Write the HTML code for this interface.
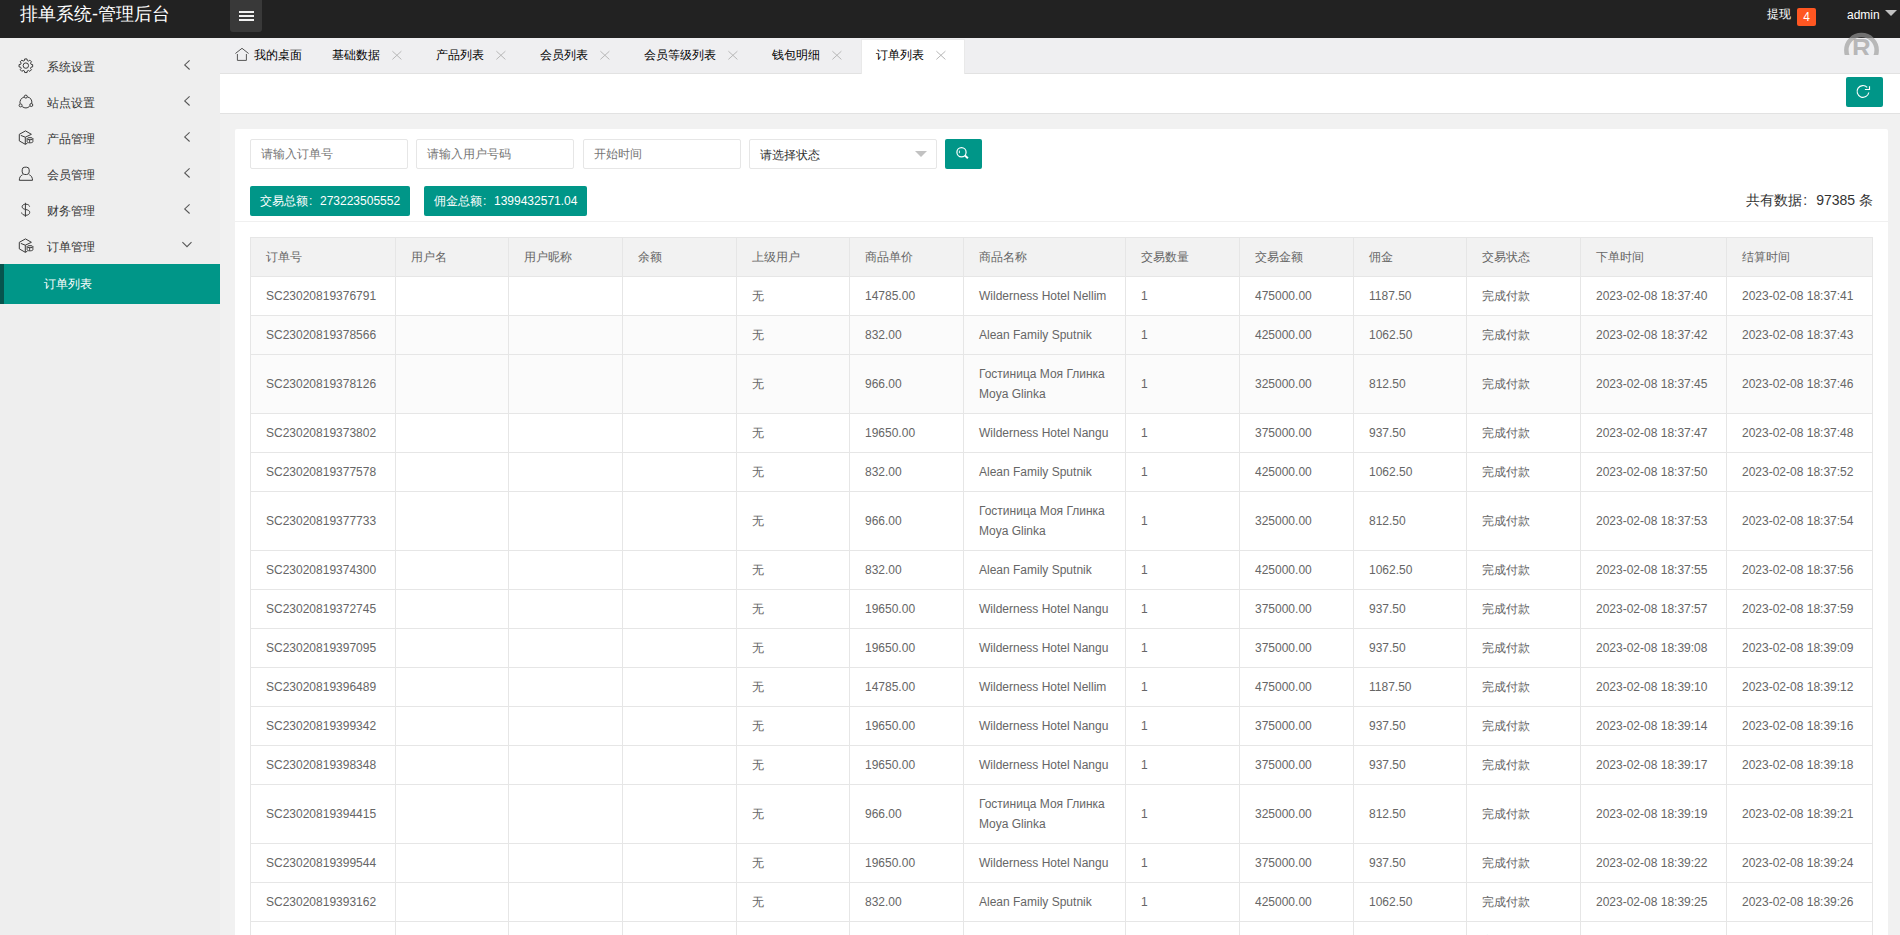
<!DOCTYPE html>
<html><head><meta charset="utf-8">
<style>
*{margin:0;padding:0;box-sizing:border-box}
html,body{width:1900px;height:935px;overflow:hidden;background:#f1f1f1;font-family:"Liberation Sans",sans-serif;font-size:12px;color:#333}
.hdr{position:absolute;left:0;top:0;width:1900px;height:38px;background:#222}
.logo{position:absolute;left:20px;top:0;height:32px;line-height:29px;color:#fff;font-size:18px}
.ham{position:absolute;left:230px;top:0;width:32px;height:32px;background:#393939;border-radius:0 0 3px 3px}
.ham i{position:absolute;left:9px;width:15px;height:2px;background:#f0f0f0}
.side{position:absolute;left:0;top:38px;width:220px;height:897px;background:#eee}
.mi{position:absolute;left:0;width:220px;height:36px}
.mi .ic{position:absolute;left:14px;top:6px;width:24px;height:24px}
.mi .tx{position:absolute;left:47px;top:1px;line-height:36px;font-size:12px;color:#333}
.mi .ar{position:absolute;left:176px;top:6px;width:24px;height:24px}
.sub{position:absolute;left:0;top:226px;width:220px;height:40px;background:#009688;border-left:4px solid #06544d}
.sub span{position:absolute;left:40px;top:0;line-height:40px;color:#fff;font-size:12px}
.tabs{position:absolute;left:220px;top:38px;width:1680px;height:36px;background:#efeff1;border-bottom:1px solid #e2e2e2}
.tab{position:absolute;top:0;height:36px;line-height:35px;font-size:12px;color:#000}
.tab.act{top:1px;height:36px;background:#fff;border:1px solid #e9e9e9;border-bottom:none}
.tab .x{position:absolute;top:5px;width:24px;height:24px}
.bar{position:absolute;left:220px;top:74px;width:1680px;height:40px;background:#fff;border-bottom:1px solid #e2e2e2}
.rbtn{position:absolute;left:1626px;top:3px;width:37px;height:30px;background:#009688;border-radius:2px}
.card{position:absolute;left:235px;top:129px;width:1653px;height:900px;background:#fff;border-radius:2px}
.inp{position:absolute;top:10px;height:30px;border:1px solid #e6e6e6;border-radius:2px;background:#fff;line-height:28px;padding-left:10px;color:#757575;font-size:12px}
.sbtn{position:absolute;left:710px;top:10px;width:37px;height:30px;background:#009688;border-radius:2px}
.gbtn{position:absolute;top:57px;height:30px;line-height:30px;background:#009688;color:#fff;border-radius:2px;padding:0 10px;font-size:12px;white-space:nowrap}
.total{position:absolute;right:15px;top:56px;line-height:30px;font-size:14px;color:#333}
.sep{position:absolute;left:0;top:92px;width:1653px;height:1px;background:#f0f0f0}
table{position:absolute;left:15px;top:108px;border-collapse:collapse;table-layout:fixed;width:1622px}
th,td{border:1px solid #e6e6e6;padding:9px 15px;line-height:20px;font-size:12px;text-align:left;font-weight:normal;color:#666;white-space:normal}
th{background:#f2f2f2}
.c12{display:inline-block;width:12px;padding-left:1px}
.c14{display:inline-block;width:14px;padding-left:1px}
.g td{background:#fbfbfb}
</style></head><body>
<div class="hdr">
  <div class="logo">排单系统-管理后台</div>
  <div class="ham"><i style="top:11px"></i><i style="top:15px"></i><i style="top:19px"></i></div>
  <div style="position:absolute;left:1767px;top:6px;line-height:16px;color:#fff;font-size:12px">提现</div>
  <div style="position:absolute;left:1797px;top:8px;width:19px;height:18px;background:#ff5722;border-radius:2px;color:#fff;font-size:12px;line-height:18px;text-align:center">4</div>
  <div style="position:absolute;left:1847px;top:7px;line-height:16px;color:#fff;font-size:12px">admin</div>
  <span style="position:absolute;left:1885px;top:10px;width:0;height:0;border-left:6px solid transparent;border-right:6px solid transparent;border-top:6px solid #c2c2c2"></span>
</div>
<div class="side">
  <div class="mi" style="top:10px"><svg class="ic" width="24" height="24" viewBox="0 0 24 24" fill="none" stroke="#3a3a3a" stroke-width="1"><path d="M10.46 6.53 L10.68 4.95 L13.02 4.95 L13.24 6.53 L14.56 7.08 L15.83 6.12 L17.48 7.77 L16.52 9.04 L17.07 10.36 L18.65 10.58 L18.65 12.92 L17.07 13.14 L16.52 14.46 L17.48 15.73 L15.83 17.38 L14.56 16.42 L13.24 16.97 L13.02 18.55 L10.68 18.55 L10.46 16.97 L9.14 16.42 L7.87 17.38 L6.22 15.73 L7.18 14.46 L6.63 13.14 L5.05 12.92 L5.05 10.58 L6.63 10.36 L7.18 9.04 L6.22 7.77 L7.87 6.12 L9.14 7.08Z"/><circle cx="11.85" cy="11.6" r="2.7"/></svg><span class="tx">系统设置</span><svg class="ar" width="24" height="24" viewBox="0 0 24 24" fill="none" stroke="#555" stroke-width="1.05"><path d="M13.6 6.3L8.7 10.9l4.9 4.6"/></svg></div>
  <div class="mi" style="top:46px"><svg class="ic" width="24" height="24" viewBox="0 0 24 24" fill="none" stroke="#3a3a3a" stroke-width="1"><path d="M10.3 6.9A6 6 0 0 0 6 13.6M8.2 16.6a6 6 0 0 0 7.5-.3M17.8 13.4a6 6 0 0 0-4.4-6.5"/><circle cx="11.8" cy="6.6" r="1.5"/><circle cx="6.6" cy="15.4" r="1.5"/><circle cx="17.3" cy="15" r="1.5"/></svg><span class="tx">站点设置</span><svg class="ar" width="24" height="24" viewBox="0 0 24 24" fill="none" stroke="#555" stroke-width="1.05"><path d="M13.6 6.3L8.7 10.9l4.9 4.6"/></svg></div>
  <div class="mi" style="top:82px"><svg class="ic" width="24" height="24" viewBox="0 0 24 24" fill="none" stroke="#3a3a3a" stroke-width="1"><path d="M5.3 8.3L11.5 4.9l5.9 3.4-6.1 2.9M5.3 8.3v6.6l6 3.4 2.1-1.1M11.3 11.2v7.1M6.8 9.4l4.5 1.8"/><ellipse cx="16" cy="12.7" rx="2.9" ry="1.05"/><path d="M13.1 12.7v3.1c0 .6 1.3 1.05 2.9 1.05s2.9-.45 2.9-1.05v-3.1M15.6 13.8v2.9" stroke-width="0.9"/></svg><span class="tx">产品管理</span><svg class="ar" width="24" height="24" viewBox="0 0 24 24" fill="none" stroke="#555" stroke-width="1.05"><path d="M13.6 6.3L8.7 10.9l4.9 4.6"/></svg></div>
  <div class="mi" style="top:118px"><svg class="ic" width="24" height="24" viewBox="0 0 24 24" fill="none" stroke="#3a3a3a" stroke-width="1"><rect x="8.2" y="5.2" width="7" height="7.3" rx="2.6"/><path d="M8.5 12.8C6.5 13.6 5.3 15.5 5.3 18.3h13.2c0-2.8-1.2-4.7-3.2-5.5"/></svg><span class="tx">会员管理</span><svg class="ar" width="24" height="24" viewBox="0 0 24 24" fill="none" stroke="#555" stroke-width="1.05"><path d="M13.6 6.3L8.7 10.9l4.9 4.6"/></svg></div>
  <div class="mi" style="top:154px"><svg class="ic" width="24" height="24" viewBox="0 0 24 24" fill="none" stroke="#3a3a3a" stroke-width="1"><path d="M15.6 8.6c-.2-1.3-1.6-2.4-3.8-2.4-2.2 0-3.7 1-3.7 2.6 0 1.6 1.5 2.2 3.7 2.7 2.3.5 3.9 1.1 3.9 2.9 0 1.7-1.6 2.9-4 2.9-2.3 0-3.9-1.2-4.1-2.8M11.4 4.8v14"/></svg><span class="tx">财务管理</span><svg class="ar" width="24" height="24" viewBox="0 0 24 24" fill="none" stroke="#555" stroke-width="1.05"><path d="M13.6 6.3L8.7 10.9l4.9 4.6"/></svg></div>
  <div class="mi" style="top:190px"><svg class="ic" width="24" height="24" viewBox="0 0 24 24" fill="none" stroke="#3a3a3a" stroke-width="1"><path d="M5.3 8.3L11.5 4.9l5.9 3.4-6.1 2.9M5.3 8.3v6.6l6 3.4 2.1-1.1M11.3 11.2v7.1M6.8 9.4l4.5 1.8"/><ellipse cx="16" cy="12.7" rx="2.9" ry="1.05"/><path d="M13.1 12.7v3.1c0 .6 1.3 1.05 2.9 1.05s2.9-.45 2.9-1.05v-3.1M15.6 13.8v2.9" stroke-width="0.9"/></svg><span class="tx">订单管理</span><svg class="ar" width="24" height="24" viewBox="0 0 24 24" fill="none" stroke="#555" stroke-width="1.05"><path d="M6.4 8.2l4.6 4.5 4.5-4.5"/></svg></div>
  <div class="sub"><span>订单列表</span></div>
</div>
<div class="tabs">
<div class="tab act" style="left:641px;width:104px"></div>
<div class="tab" style="left:34px"><svg style="position:absolute;left:-24px;top:5px" width="24" height="24" viewBox="0 0 24 24" fill="none" stroke="#555" stroke-width="1"><path d="M5.4 10.5L12 5.3l6.6 5.2M7.4 11v6.4h9V11"/></svg>我的桌面</div>
<div class="tab" style="left:112px">基础数据<svg class="x" style="left:53px" width="24" height="24" viewBox="0 0 24 24" fill="none" stroke="#b8b8b8" stroke-width="1"><path d="M7.4 8.2l9 8.2M16.4 8.2l-9 8.2"/></svg></div>
<div class="tab" style="left:216px">产品列表<svg class="x" style="left:53px" width="24" height="24" viewBox="0 0 24 24" fill="none" stroke="#b8b8b8" stroke-width="1"><path d="M7.4 8.2l9 8.2M16.4 8.2l-9 8.2"/></svg></div>
<div class="tab" style="left:320px">会员列表<svg class="x" style="left:53px" width="24" height="24" viewBox="0 0 24 24" fill="none" stroke="#b8b8b8" stroke-width="1"><path d="M7.4 8.2l9 8.2M16.4 8.2l-9 8.2"/></svg></div>
<div class="tab" style="left:424px">会员等级列表<svg class="x" style="left:77px" width="24" height="24" viewBox="0 0 24 24" fill="none" stroke="#b8b8b8" stroke-width="1"><path d="M7.4 8.2l9 8.2M16.4 8.2l-9 8.2"/></svg></div>
<div class="tab" style="left:552px">钱包明细<svg class="x" style="left:53px" width="24" height="24" viewBox="0 0 24 24" fill="none" stroke="#b8b8b8" stroke-width="1"><path d="M7.4 8.2l9 8.2M16.4 8.2l-9 8.2"/></svg></div>
<div class="tab" style="left:656px">订单列表<svg class="x" style="left:53px" width="24" height="24" viewBox="0 0 24 24" fill="none" stroke="#b8b8b8" stroke-width="1"><path d="M7.4 8.2l9 8.2M16.4 8.2l-9 8.2"/></svg></div>
</div>
<div class="bar"><div class="rbtn"><svg style="position:absolute;left:5px;top:3px" width="24" height="24" viewBox="0 0 24 24" fill="none" stroke="#fff" stroke-width="1.15"><path d="M16.2 7.3A5.9 5.9 0 1 0 17.8 12.5"/><path d="M13.9 9.5h4.6V6.3"/></svg></div></div>
<div class="card">
  <div class="inp" style="left:15px;width:158px">请输入订单号</div>
  <div class="inp" style="left:181px;width:158px">请输入用户号码</div>
  <div class="inp" style="left:348px;width:158px">开始时间</div>
  <div class="inp" style="left:514px;width:188px;color:#333;line-height:30px">请选择状态<span style="position:absolute;left:165px;top:11px;width:0;height:0;border-left:6px solid transparent;border-right:6px solid transparent;border-top:6px solid #c2c2c2"></span></div>
  <div class="sbtn"><svg style="position:absolute;left:5px;top:2px" width="24" height="24" viewBox="0 0 24 24" fill="none" stroke="#fff" stroke-width="1.2"><circle cx="11.5" cy="11.2" r="4.6"/><path d="M14.9 14.6l3 2.6" stroke-width="2"/><path d="M9.4 9.6v2.6" stroke-width="0.9"/></svg></div>
  <div class="gbtn" style="left:15px">交易总额<span class="c12">:</span>273223505552</div>
  <div class="gbtn" style="left:189px">佣金总额<span class="c12">:</span>1399432571.04</div>
  <div class="total">共有数据<span class="c14">:</span>97385 条</div>
  <div class="sep"></div>
  <table>
<colgroup><col style="width:145px"><col style="width:113px"><col style="width:114px"><col style="width:114px"><col style="width:113px"><col style="width:114px"><col style="width:162px"><col style="width:114px"><col style="width:114px"><col style="width:113px"><col style="width:114px"><col style="width:146px"><col style="width:146px"></colgroup>
<tr><th>订单号</th><th>用户名</th><th>用户昵称</th><th>余额</th><th>上级用户</th><th>商品单价</th><th>商品名称</th><th>交易数量</th><th>交易金额</th><th>佣金</th><th>交易状态</th><th>下单时间</th><th>结算时间</th></tr>
<tr><td>SC23020819376791</td><td></td><td></td><td></td><td>无</td><td>14785.00</td><td>Wilderness Hotel Nellim</td><td>1</td><td>475000.00</td><td>1187.50</td><td>完成付款</td><td>2023-02-08 18:37:40</td><td>2023-02-08 18:37:41</td></tr>
<tr class="g"><td>SC23020819378566</td><td></td><td></td><td></td><td>无</td><td>832.00</td><td>Alean Family Sputnik</td><td>1</td><td>425000.00</td><td>1062.50</td><td>完成付款</td><td>2023-02-08 18:37:42</td><td>2023-02-08 18:37:43</td></tr>
<tr class="g"><td>SC23020819378126</td><td></td><td></td><td></td><td>无</td><td>966.00</td><td>Гостиница Моя Глинка<br>Moya Glinka</td><td>1</td><td>325000.00</td><td>812.50</td><td>完成付款</td><td>2023-02-08 18:37:45</td><td>2023-02-08 18:37:46</td></tr>
<tr><td>SC23020819373802</td><td></td><td></td><td></td><td>无</td><td>19650.00</td><td>Wilderness Hotel Nangu</td><td>1</td><td>375000.00</td><td>937.50</td><td>完成付款</td><td>2023-02-08 18:37:47</td><td>2023-02-08 18:37:48</td></tr>
<tr><td>SC23020819377578</td><td></td><td></td><td></td><td>无</td><td>832.00</td><td>Alean Family Sputnik</td><td>1</td><td>425000.00</td><td>1062.50</td><td>完成付款</td><td>2023-02-08 18:37:50</td><td>2023-02-08 18:37:52</td></tr>
<tr><td>SC23020819377733</td><td></td><td></td><td></td><td>无</td><td>966.00</td><td>Гостиница Моя Глинка<br>Moya Glinka</td><td>1</td><td>325000.00</td><td>812.50</td><td>完成付款</td><td>2023-02-08 18:37:53</td><td>2023-02-08 18:37:54</td></tr>
<tr><td>SC23020819374300</td><td></td><td></td><td></td><td>无</td><td>832.00</td><td>Alean Family Sputnik</td><td>1</td><td>425000.00</td><td>1062.50</td><td>完成付款</td><td>2023-02-08 18:37:55</td><td>2023-02-08 18:37:56</td></tr>
<tr><td>SC23020819372745</td><td></td><td></td><td></td><td>无</td><td>19650.00</td><td>Wilderness Hotel Nangu</td><td>1</td><td>375000.00</td><td>937.50</td><td>完成付款</td><td>2023-02-08 18:37:57</td><td>2023-02-08 18:37:59</td></tr>
<tr><td>SC23020819397095</td><td></td><td></td><td></td><td>无</td><td>19650.00</td><td>Wilderness Hotel Nangu</td><td>1</td><td>375000.00</td><td>937.50</td><td>完成付款</td><td>2023-02-08 18:39:08</td><td>2023-02-08 18:39:09</td></tr>
<tr><td>SC23020819396489</td><td></td><td></td><td></td><td>无</td><td>14785.00</td><td>Wilderness Hotel Nellim</td><td>1</td><td>475000.00</td><td>1187.50</td><td>完成付款</td><td>2023-02-08 18:39:10</td><td>2023-02-08 18:39:12</td></tr>
<tr><td>SC23020819399342</td><td></td><td></td><td></td><td>无</td><td>19650.00</td><td>Wilderness Hotel Nangu</td><td>1</td><td>375000.00</td><td>937.50</td><td>完成付款</td><td>2023-02-08 18:39:14</td><td>2023-02-08 18:39:16</td></tr>
<tr><td>SC23020819398348</td><td></td><td></td><td></td><td>无</td><td>19650.00</td><td>Wilderness Hotel Nangu</td><td>1</td><td>375000.00</td><td>937.50</td><td>完成付款</td><td>2023-02-08 18:39:17</td><td>2023-02-08 18:39:18</td></tr>
<tr><td>SC23020819394415</td><td></td><td></td><td></td><td>无</td><td>966.00</td><td>Гостиница Моя Глинка<br>Moya Glinka</td><td>1</td><td>325000.00</td><td>812.50</td><td>完成付款</td><td>2023-02-08 18:39:19</td><td>2023-02-08 18:39:21</td></tr>
<tr><td>SC23020819399544</td><td></td><td></td><td></td><td>无</td><td>19650.00</td><td>Wilderness Hotel Nangu</td><td>1</td><td>375000.00</td><td>937.50</td><td>完成付款</td><td>2023-02-08 18:39:22</td><td>2023-02-08 18:39:24</td></tr>
<tr><td>SC23020819393162</td><td></td><td></td><td></td><td>无</td><td>832.00</td><td>Alean Family Sputnik</td><td>1</td><td>425000.00</td><td>1062.50</td><td>完成付款</td><td>2023-02-08 18:39:25</td><td>2023-02-08 18:39:26</td></tr>
<tr><td>SC23020819391234</td><td></td><td></td><td></td><td>无</td><td>19650.00</td><td>Wilderness Hotel Nangu</td><td>1</td><td>375000.00</td><td>937.50</td><td>完成付款</td><td>2023-02-08 18:39:27</td><td>2023-02-08 18:39:28</td></tr>
</table>
</div>
<div style="position:absolute;left:1840px;top:30px;width:45px;height:25px;overflow:hidden;z-index:10"><svg width="45" height="45" viewBox="0 0 45 45" style="position:absolute;left:0;top:0"><circle cx="21.5" cy="20.2" r="15.15" fill="none" stroke="rgba(155,155,155,0.66)" stroke-width="4.5"/><text x="21.4" y="27.3" text-anchor="middle" font-family="Liberation Sans" font-weight="bold" font-size="26" fill="rgba(155,155,155,0.66)">R</text></svg></div>
</body></html>
